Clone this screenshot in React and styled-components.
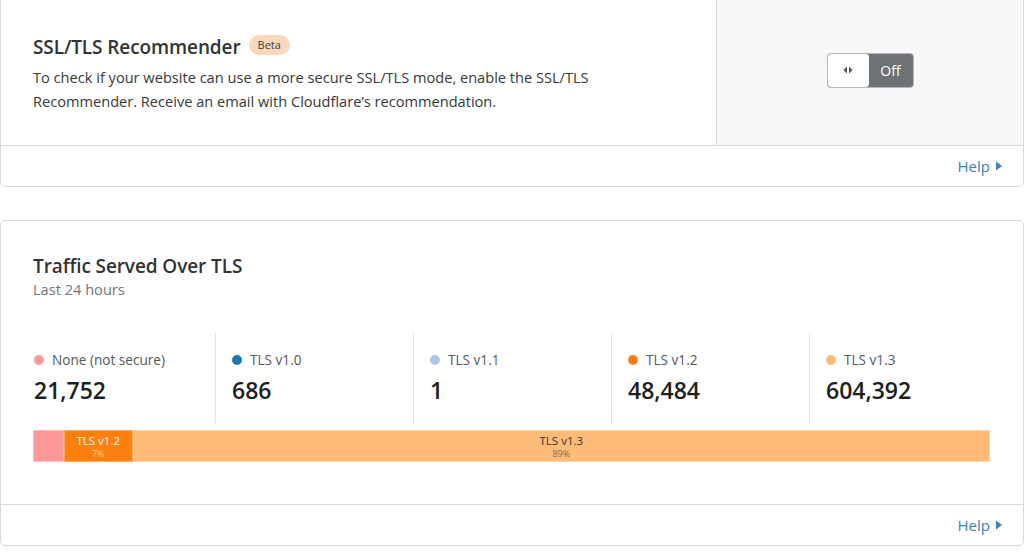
import React from "react";
import styled, { createGlobalStyle } from "styled-components";

const GlobalStyle = createGlobalStyle`
  html, body {
    margin: 0;
    padding: 0;
    background: #fff;
  }
  body {
    font-family: "Open Sans", "Noto Sans", sans-serif;
    color: #36393a;
    -webkit-font-smoothing: antialiased;
  }
`;

const Page = styled.div`
  width: 1024px;
  display: flex;
  flex-direction: column;
  gap: 33px;
`;

const Card = styled.section`
  background: #fff;
  border: 1px solid #d9d9d9;
  border-radius: ${(p) => (p.$cut ? "0 0 5px 5px" : "5px")};
  border-top-width: ${(p) => (p.$cut ? 0 : "1px")};
  display: flex;
  flex-direction: column;
`;

const Main = styled.div`
  display: flex;
  min-height: 145px;
  border-bottom: 1px solid #d9d9d9;
`;

const Body = styled.div`
  flex: 1;
  display: flex;
  flex-direction: column;
  justify-content: center;
  padding: 0 32px;
`;

const Control = styled.div`
  width: 306px;
  background: #f7f7f7;
  border-left: 1px solid #d9d9d9;
  display: flex;
  align-items: center;
  justify-content: center;
  padding-bottom: 5px;
`;

const TitleRow = styled.div`
  display: flex;
  align-items: center;
  gap: 8px;
`;

const Title = styled.h2`
  margin: 0;
  font-size: 19px;
  line-height: 28px;
  font-weight: 600;
  color: #313335;
  letter-spacing: -0.1px;
`;

const Badge = styled.span`
  background: #fbd8bd;
  color: #4a3a30;
  font-size: 11px;
  line-height: 20px;
  padding: 0 9px;
  border-radius: 10px;
  margin-top: -4px;
`;

const Text = styled.p`
  margin: 4px 0 0;
  font-size: 14.6px;
  line-height: 24px;
  color: #36393a;
  max-width: 615px;
`;

const Sub = styled.div`
  font-size: 14.6px;
  line-height: 20px;
  color: #72767a;
  margin-top: -1px;
`;

const Toggle = styled.button`
  display: flex;
  width: 87px;
  height: 35px;
  padding: 0;
  border: 1px solid #b5b8ba;
  border-radius: 4px;
  overflow: hidden;
  background: #6d7275;
  cursor: pointer;
  font-family: inherit;
`;

const Knob = styled.span`
  width: 41px;
  height: 100%;
  background: #fff;
  border-radius: 3px;
  display: flex;
  align-items: center;
  justify-content: center;
`;

const ToggleLabel = styled.span`
  flex: 1;
  display: flex;
  align-items: center;
  justify-content: center;
  color: #fff;
  font-size: 14px;
`;

const Footer = styled.div`
  height: 40px;
  display: flex;
  align-items: center;
  justify-content: flex-end;
  padding-right: 21px;
`;

const HelpLink = styled.a`
  display: flex;
  align-items: center;
  gap: 6px;
  color: #3a82b8;
  font-size: 15px;
  text-decoration: none;
  cursor: pointer;
`;

const ChartBody = styled.div`
  padding: 31px 32px 42px;
  border-bottom: 1px solid #d9d9d9;
`;

const Stats = styled.div`
  display: flex;
  margin: 34px -16px 5px;
`;

const Stat = styled.div`
  width: 198px;
  box-sizing: border-box;
  padding: 20px 16px 19px;
  border-left: 1px solid ${(p) => (p.$first ? "transparent" : "#e4e4e4")};
`;

const StatLabel = styled.div`
  display: flex;
  align-items: center;
  gap: 8px;
  font-size: 13.6px;
  line-height: 14px;
  color: #55595c;
`;

const Dot = styled.span`
  width: 10px;
  height: 10px;
  border-radius: 50%;
  background: ${(p) => p.$color};
`;

const StatValue = styled.div`
  margin-top: 7px;
  font-size: 23px;
  line-height: 32px;
  font-weight: 600;
  color: #1d1f20;
`;

const Bar = styled.div`
  display: flex;
  height: 32px;
`;

const Segment = styled.div`
  box-sizing: border-box;
  background: ${(p) => p.$color};
  border: 1px solid rgba(255, 255, 255, 0.35);
  display: flex;
  flex-direction: column;
  align-items: center;
  justify-content: center;
  overflow: hidden;
  color: ${(p) => (p.$light ? "#333" : "#fff")};
`;

const SegName = styled.span`
  font-size: 11.5px;
  line-height: 14px;
`;

const SegPct = styled.span`
  font-size: 9px;
  line-height: 11px;
  opacity: 0.6;
`;

const stats = [
  { label: "None (not secure)", value: 21752, color: "#ff9896" },
  { label: "TLS v1.0", value: 686, color: "#1f77b4" },
  { label: "TLS v1.1", value: 1, color: "#aec7e8" },
  { label: "TLS v1.2", value: 48484, color: "#ff7f0e" },
  { label: "TLS v1.3", value: 604392, color: "#ffbb78", light: true },
];

const total = stats.reduce((s, d) => s + d.value, 0);

const Arrows = () => (
  <svg width="10" height="8" viewBox="0 0 10 8">
    <path d="M4 0.5 L0.5 4 L4 7.5 Z" fill="#555" />
    <path d="M6 0.5 L9.5 4 L6 7.5 Z" fill="#555" />
  </svg>
);

const Caret = () => (
  <svg width="6" height="10" viewBox="0 0 6 10">
    <path d="M0 0.5 L6 5 L0 9.5 Z" fill="#3a82b8" />
  </svg>
);

const Help = () => (
  <Footer>
    <HelpLink>
      Help <Caret />
    </HelpLink>
  </Footer>
);

export default function App() {
  return (
    <>
      <GlobalStyle />
      <Page>
        <Card $cut>
          <Main>
            <Body>
              <TitleRow>
                <Title>SSL/TLS Recommender</Title>
                <Badge>Beta</Badge>
              </TitleRow>
              <Text>
                To check if your website can use a more secure SSL/TLS mode,
                enable the SSL/TLS Recommender. Receive an email with
                Cloudflare’s recommendation.
              </Text>
            </Body>
            <Control>
              <Toggle>
                <Knob>
                  <Arrows />
                </Knob>
                <ToggleLabel>Off</ToggleLabel>
              </Toggle>
            </Control>
          </Main>
          <Help />
        </Card>

        <Card>
          <ChartBody>
            <Title>Traffic Served Over TLS</Title>
            <Sub>Last 24 hours</Sub>
            <Stats>
              {stats.map((s, i) => (
                <Stat key={s.label} $first={i === 0}>
                  <StatLabel>
                    <Dot $color={s.color} />
                    {s.label}
                  </StatLabel>
                  <StatValue>{s.value.toLocaleString("en-US")}</StatValue>
                </Stat>
              ))}
            </Stats>
            <Bar>
              {stats
                .filter((s) => s.value / total > 0.01)
                .map((s) => {
                  const pct = (s.value / total) * 100;
                  return (
                    <Segment
                      key={s.label}
                      $color={s.color}
                      $light={s.light}
                      style={{ width: `${pct}%` }}
                    >
                      {pct > 5 && (
                        <>
                          <SegName>{s.label}</SegName>
                          <SegPct>{Math.floor(pct)}%</SegPct>
                        </>
                      )}
                    </Segment>
                  );
                })}
            </Bar>
          </ChartBody>
          <Help />
        </Card>
      </Page>
    </>
  );
}
